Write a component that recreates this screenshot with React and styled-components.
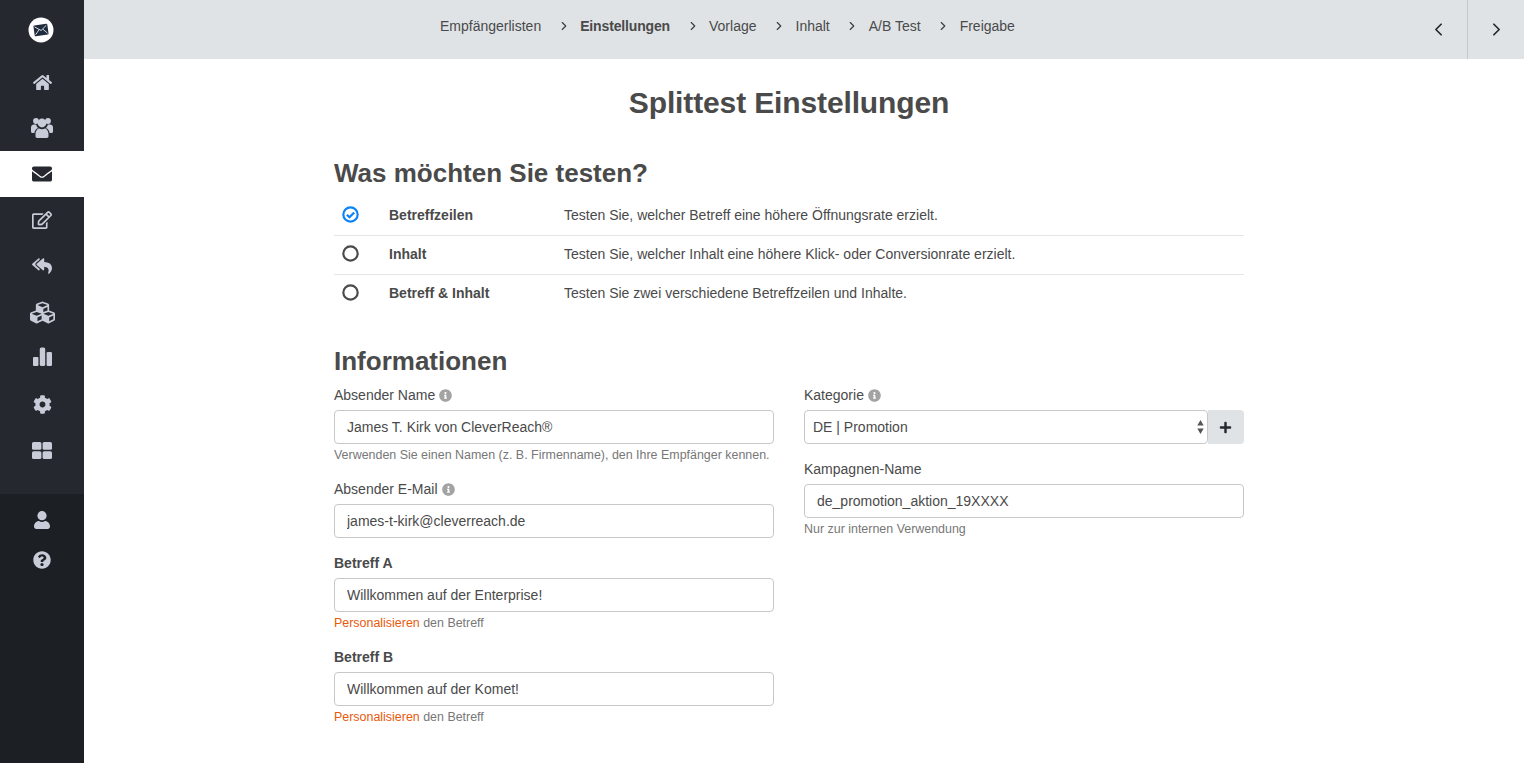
import React from 'react';
import styled, { createGlobalStyle } from 'styled-components';
import {
  FaHome, FaEnvelope, FaRegEdit, FaReplyAll, FaCubes, FaCog,
  FaQuestionCircle, FaInfoCircle, FaPlus,
} from 'react-icons/fa';
import { FiChevronLeft, FiChevronRight } from 'react-icons/fi';

const GlobalStyle = createGlobalStyle`
  html, body { margin: 0; padding: 0; height: 100%; background: #fff; overflow: hidden; }
  body { font-family: "Liberation Sans", Arial, sans-serif; font-size: 14px; color: #4a4a4a; }
`;

const Page = styled.div`
  display: flex;
  height: 763px;
`;

const Sidebar = styled.nav`
  width: 84px;
  flex: none;
  display: flex;
  flex-direction: column;
  background: #25282e;
`;

const LogoRow = styled.div`
  height: 59px;
  display: flex;
  align-items: center;
  justify-content: center;
  padding-right: 2px;
  box-sizing: border-box;
`;

const NavTop = styled.div`
  height: 435px;
`;

const NavBottom = styled.div`
  flex: 1;
  background: #1c1f24;
  padding-top: 6px;
`;

const NavItem = styled.div`
  height: ${(p) => p.$h || 46}px;
  display: flex;
  align-items: center;
  justify-content: center;
  background: ${(p) => (p.$active ? '#fff' : 'transparent')};
  color: ${(p) => (p.$active ? '#25282e' : '#c8ccd8')};
  font-size: 19px;
`;

const Main = styled.div`
  flex: 1;
  display: flex;
  flex-direction: column;
  min-width: 0;
`;

const TopBar = styled.header`
  height: 59px;
  flex: none;
  display: flex;
  background: #dfe3e6;
`;

const Steps = styled.div`
  flex: 1;
  display: flex;
  align-items: center;
  padding: 0 0 8px 356px;
  font-size: 14px;
  color: #4a4a4a;
`;

const Step = styled.span`
  font-weight: ${(p) => (p.$current ? 700 : 400)};
  letter-spacing: ${(p) => (p.$current ? '-0.15px' : '0')};
`;

const StepArrow = styled.span`
  width: 39px;
  display: flex;
  justify-content: center;
  color: #3a3d42;
  font-size: 14px;
  padding-left: 6px;
  box-sizing: border-box;
`;

const PageNav = styled.button`
  width: 57px;
  height: 59px;
  border: 0;
  padding: 0;
  display: flex;
  align-items: center;
  justify-content: center;
  background: transparent;
  color: #25282e;
  font-size: 21px;
  border-left: ${(p) => (p.$divider ? '1px solid #c4c8cb' : '0')};
`;

const ContentArea = styled.div`
  flex: 1;
  padding-right: 30px;
`;

const Content = styled.main`
  width: 910px;
  margin: 0 auto;
  padding: 26px 0 0;
`;

const Title = styled.h1`
  margin: 0 0 37px;
  font-size: 30px;
  line-height: 36px;
  font-weight: 700;
  letter-spacing: -0.13px;
  text-align: center;
`;

const SectionTitle = styled.h2`
  margin: 0 0 9px;
  font-size: 26px;
  line-height: 30px;
  font-weight: 700;
`;

const Options = styled.div`
  margin-bottom: 32px;
`;

const Option = styled.div`
  height: 39px;
  box-sizing: border-box;
  padding-bottom: 3px;
  display: flex;
  align-items: center;
  border-bottom: 1px solid ${(p) => (p.$last ? 'transparent' : '#e6e6e6')};
`;

const Mark = styled.span`
  width: 55px;
  padding-left: 8px;
  box-sizing: border-box;
  display: flex;
  color: ${(p) => (p.$on ? '#0a84f5' : '#4a4a4a')};
`;

const OptionName = styled.span`
  width: 175px;
  font-weight: 700;
`;

const FormGrid = styled.div`
  display: grid;
  grid-template-columns: 440px 440px;
  column-gap: 30px;
  align-items: start;
`;

const Field = styled.div`
  margin-bottom: 15px;
`;

const Label = styled.label`
  display: flex;
  align-items: center;
  gap: 4px;
  height: 20px;
  margin-bottom: 5px;
  font-weight: ${(p) => (p.$bold ? 700 : 400)};
`;

const Info = styled.span`
  display: flex;
  font-size: 13px;
  color: #a3a3a3;
`;

const Input = styled.input`
  display: block;
  width: 100%;
  height: 34px;
  box-sizing: border-box;
  padding: 0 12px;
  border: 1px solid #c8c8c8;
  border-radius: 4px;
  background: #fff;
  font: 14px "Liberation Sans", Arial, sans-serif;
  color: #4a4a4a;
  outline: none;
`;

const Help = styled.div`
  font-size: 12.45px;
  line-height: 18px;
  padding-top: 2px;
  color: #777;
  white-space: nowrap;
`;

const Accent = styled.span`
  color: #e8590c;
`;

const SelectRow = styled.div`
  display: flex;
`;

const SelectWrap = styled.div`
  position: relative;
  flex: 1;
`;

const Select = styled.select`
  display: block;
  width: 100%;
  height: 34px;
  box-sizing: border-box;
  padding: 0 8px;
  border: 1px solid #c8c8c8;
  border-radius: 4px;
  background: #fff;
  appearance: none;
  font: 14px "Liberation Sans", Arial, sans-serif;
  color: #4a4a4a;
  outline: none;
`;

const SelectArrows = styled.svg`
  position: absolute;
  right: 4px;
  top: 10px;
  width: 7px;
  height: 14px;
  pointer-events: none;
`;

const AddButton = styled.button`
  width: 36px;
  height: 34px;
  border: 0;
  padding: 0 2px 0 0;
  display: flex;
  align-items: center;
  justify-content: center;
  background: #dfe3e6;
  border-radius: 0 4px 4px 0;
  color: #25282e;
  font-size: 13px;
`;

const BarsIcon = styled.svg`
  margin-bottom: 4px;
`;

const Logo = () => (
  <svg width="26" height="26" viewBox="0 0 26 26">
    <circle cx="13" cy="13" r="12.5" fill="#fff" />
    <g transform="rotate(-8 13 13)">
      <rect x="6" y="7.5" width="14" height="11" rx="1" fill="#1f2c3d" />
      <path d="M7 9l6 4.5L19 9M7 17l4-4.5M19 17l-4-4.5" fill="none" stroke="#dfe3e6" strokeWidth="0.9" />
    </g>
  </svg>
);

const UsersIcon = () => (
  <svg width="22" height="20" viewBox="0 0 22 20" fill="currentColor">
    <circle cx="5" cy="3" r="2.9" />
    <circle cx="17" cy="3" r="2.9" />
    <circle cx="11" cy="5" r="4.4" />
    <path d="M0 9.5C0 7.8 1.3 6.6 3 6.6h2.2c.2 1.4.9 2.6 2 3.5C5 11 3.6 13 3.4 15H1.5C.6 15 0 14.4 0 13.5z" />
    <path d="M22 9.5c0-1.7-1.3-2.9-3-2.9h-2.2c-.2 1.4-.9 2.6-2 3.5 2.2.9 3.6 2.9 3.8 4.9h1.9c.9 0 1.5-.6 1.5-1.5z" />
    <path d="M4.5 16c0-3 2-5.6 3.6-5.6.8.5 1.8.8 2.9.8s2.1-.3 2.9-.8c1.6 0 3.6 2.6 3.6 5.6v2.3c0 .9-.7 1.7-1.7 1.7H6.2c-1 0-1.7-.8-1.7-1.7z" />
  </svg>
);

const Bars = () => (
  <BarsIcon width="19" height="19" viewBox="0 0 19 19" fill="currentColor">
    <rect x="0" y="10" width="5.4" height="9" rx="1" />
    <rect x="6.8" y="0.5" width="5.4" height="18.5" rx="1.6" />
    <rect x="13.6" y="5" width="5.4" height="14" rx="1.2" />
  </BarsIcon>
);

const TilesIcon = () => (
  <svg width="20" height="17" viewBox="0 0 20 17" fill="currentColor">
    <rect x="0" y="0" width="9.4" height="7.8" rx="1.6" />
    <rect x="10.6" y="0" width="9.4" height="7.8" rx="1.6" />
    <rect x="0" y="9.2" width="9.4" height="7.8" rx="1.6" />
    <rect x="10.6" y="9.2" width="9.4" height="7.8" rx="1.6" />
  </svg>
);

const UserIcon = () => (
  <svg width="16" height="18" viewBox="0 0 16 18" fill="currentColor">
    <circle cx="8" cy="4.7" r="4.6" />
    <path d="M0 15.5C0 12.4 2.4 10 5 10c.9.6 2 1 3 1s2.1-.4 3-1c2.6 0 5 2.4 5 5.5 0 1.5-1 2.5-2.5 2.5h-11C1 18 0 17 0 15.5z" />
  </svg>
);

const Radio = ({ on }) => (
  <svg width="17" height="17" viewBox="0 0 18 18" fill="none" stroke="currentColor">
    <circle cx="9" cy="9" r="7.6" strokeWidth="2.3" />
    {on && <path d="M5.2 9.3l2.7 2.6 5-5" strokeWidth="2.4" />}
  </svg>
);

const navTop = [
  [<FaHome key="h" size={19} />],
  [<UsersIcon key="u" />],
  [<FaEnvelope key="e" size={20} />, true],
  [<FaRegEdit key="r" size={20} />],
  [<FaReplyAll key="a" size={20} />],
  [<FaCubes key="c" size={25} />],
  [<Bars key="b" />],
  [<FaCog key="g" size={19} />],
  [<TilesIcon key="t" />],
];

const steps = ['Empfängerlisten', 'Einstellungen', 'Vorlage', 'Inhalt', 'A/B Test', 'Freigabe'];

const options = [
  ['Betreffzeilen', 'Testen Sie, welcher Betreff eine höhere Öffnungsrate erzielt.'],
  ['Inhalt', 'Testen Sie, welcher Inhalt eine höhere Klick- oder Conversionrate erzielt.'],
  ['Betreff & Inhalt', 'Testen Sie zwei verschiedene Betreffzeilen und Inhalte.'],
];

export default function App() {
  return (
    <Page>
      <GlobalStyle />
      <Sidebar>
        <LogoRow><Logo /></LogoRow>
        <NavTop>
          {navTop.map(([icon, active], i) => (
            <NavItem key={i} $active={active}>{icon}</NavItem>
          ))}
        </NavTop>
        <NavBottom>
          <NavItem $h={40}><UserIcon /></NavItem>
          <NavItem $h={40}><FaQuestionCircle size={18} /></NavItem>
        </NavBottom>
      </Sidebar>

      <Main>
        <TopBar>
          <Steps>
            {steps.map((s, i) => (
              <React.Fragment key={s}>
                {i > 0 && <StepArrow><FiChevronRight /></StepArrow>}
                <Step $current={i === 1}>{s}</Step>
              </React.Fragment>
            ))}
          </Steps>
          <PageNav><FiChevronLeft /></PageNav>
          <PageNav $divider><FiChevronRight /></PageNav>
        </TopBar>

        <ContentArea>
          <Content>
            <Title>Splittest Einstellungen</Title>

            <SectionTitle>Was möchten Sie testen?</SectionTitle>
            <Options>
              {options.map(([name, text], i) => (
                <Option key={name} $last={i === options.length - 1}>
                  <Mark $on={i === 0}><Radio on={i === 0} /></Mark>
                  <OptionName>{name}</OptionName>
                  <span>{text}</span>
                </Option>
              ))}
            </Options>

            <SectionTitle>Informationen</SectionTitle>
            <FormGrid>
              <div>
                <Field>
                  <Label>Absender Name <Info><FaInfoCircle /></Info></Label>
                  <Input readOnly value="James T. Kirk von CleverReach®" />
                  <Help>Verwenden Sie einen Namen (z. B. Firmenname), den Ihre Empfänger kennen.</Help>
                </Field>
                <Field>
                  <Label>Absender E-Mail <Info><FaInfoCircle /></Info></Label>
                  <Input readOnly value="james-t-kirk@cleverreach.de" />
                </Field>
                <Field>
                  <Label $bold>Betreff A</Label>
                  <Input readOnly value="Willkommen auf der Enterprise!" />
                  <Help><Accent>Personalisieren</Accent> den Betreff</Help>
                </Field>
                <Field>
                  <Label $bold>Betreff B</Label>
                  <Input readOnly value="Willkommen auf der Komet!" />
                  <Help><Accent>Personalisieren</Accent> den Betreff</Help>
                </Field>
              </div>
              <div>
                <Field>
                  <Label>Kategorie <Info><FaInfoCircle /></Info></Label>
                  <SelectRow>
                    <SelectWrap>
                      <Select defaultValue="promo">
                        <option value="promo">DE | Promotion</option>
                      </Select>
                      <SelectArrows viewBox="0 0 7 14" fill="#555">
                        <path d="M3.5 0l3.2 5.5H.3zM3.5 14L.3 8.5h6.4z" />
                      </SelectArrows>
                    </SelectWrap>
                    <AddButton><FaPlus /></AddButton>
                  </SelectRow>
                </Field>
                <Field>
                  <Label>Kampagnen-Name</Label>
                  <Input readOnly value="de_promotion_aktion_19XXXX" />
                  <Help>Nur zur internen Verwendung</Help>
                </Field>
              </div>
            </FormGrid>
          </Content>
        </ContentArea>
      </Main>
    </Page>
  );
}
